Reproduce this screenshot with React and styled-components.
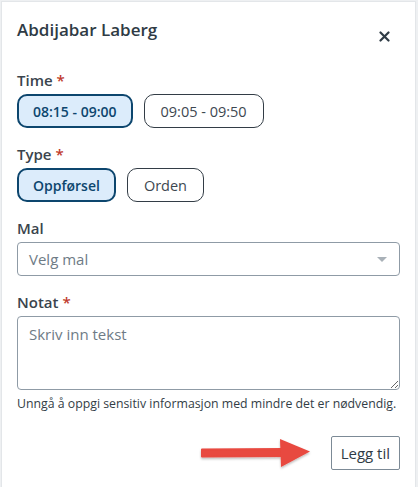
import React from 'react'
import styled, { createGlobalStyle } from 'styled-components'

const GlobalStyle = createGlobalStyle`
  html, body {
    margin: 0;
    padding: 0;
    background: #eef0f2;
  }
  body {
    font-family: "Open Sans", "Noto Sans", sans-serif;
    color: #2f3b45;
  }
`

const times = [
  { label: '08:15 - 09:00', active: true },
  { label: '09:05 - 09:50', active: false }
]

const types = [
  { label: 'Oppførsel', active: true },
  { label: 'Orden', active: false }
]

const App = () => (
  <>
    <GlobalStyle />
    <Card>
      <Header>
        <Title>Abdijabar Laberg</Title>
        <Close aria-label="Lukk">
          <svg width="11" height="11" viewBox="0 0 11 11">
            <path d="M1.5 1.5 L9.5 9.5 M9.5 1.5 L1.5 9.5" stroke="#2f3b45" strokeWidth="2.2" strokeLinecap="round" />
          </svg>
        </Close>
      </Header>

      <Field>
        <Label>Time <Req>*</Req></Label>
        <Chips>
          {times.map(t => (
            <Chip key={t.label} $active={t.active}>{t.label}</Chip>
          ))}
        </Chips>
      </Field>

      <Field>
        <Label>Type <Req>*</Req></Label>
        <Chips>
          {types.map(t => (
            <Chip key={t.label} $active={t.active}>{t.label}</Chip>
          ))}
        </Chips>
      </Field>

      <Field>
        <Label>Mal</Label>
        <Select>
          <span>Velg mal</span>
          <Caret />
        </Select>
      </Field>

      <Field>
        <Label>Notat <Req>*</Req></Label>
        <TextArea placeholder="Skriv inn tekst" />
        <Help>Unngå å oppgi sensitiv informasjon med mindre det er nødvendig.</Help>
      </Field>

      <Footer>
        <Arrow width="120" height="36" viewBox="0 0 120 36">
          <defs>
            <filter id="sh" x="-10%" y="-30%" width="120%" height="160%">
              <feDropShadow dx="0" dy="1.5" stdDeviation="1.2" floodColor="#000" floodOpacity="0.28" />
            </filter>
          </defs>
          <g filter="url(#sh)">
            <path d="M6 13.5 L88 13 L88 20 L6 20.5 Z" fill="#e8483f" stroke="#e8483f" strokeWidth="2" strokeLinejoin="round" />
            <path d="M84 3 L114 15.5 L85 31 Z" fill="#e8483f" />
          </g>
        </Arrow>
        <SubmitButton>Legg til</SubmitButton>
      </Footer>
    </Card>
  </>
)

const Card = styled.div`
  position: relative;
  box-sizing: border-box;
  margin: 1px 2px 0 1px;
  height: 486px;
  background: #fff;
  border: 1px solid #e3e6e9;
  border-bottom: none;
  padding: 16px 15px 0 15px;
`

const Header = styled.div`
  display: flex;
  align-items: flex-start;
  justify-content: space-between;
  margin-bottom: 28px;
`

const Title = styled.h2`
  margin: 0;
  font-size: 17px;
  line-height: 24px;
  font-weight: 600;
  color: #2f3b45;
`

const Close = styled.button`
  border: none;
  background: none;
  padding: 0;
  margin: 13px 10px 0 0;
  width: 11px;
  height: 11px;
  display: flex;
  cursor: pointer;
`

const Field = styled.div`
  margin-bottom: 16px;
`

const Label = styled.div`
  font-size: 15px;
  line-height: 20px;
  font-weight: 600;
  color: #3a444d;
  margin-bottom: 4px;
`

const Req = styled.span`
  color: #c0392b;
`

const Chips = styled.div`
  display: flex;
  gap: 11px;
`

const Chip = styled.button`
  box-sizing: border-box;
  height: 34px;
  padding: 0 ${p => (p.$active ? '14px' : '16px')};
  border-radius: 10px;
  font-family: inherit;
  font-size: ${p => (p.$active ? '14px' : '14.5px')};
  cursor: pointer;
  border: ${p => (p.$active ? '2px solid #0d466e' : '1px solid #333d46')};
  background: ${p => (p.$active ? '#dcecfb' : '#fff')};
  color: ${p => (p.$active ? '#0d466e' : '#3d4750')};
  font-weight: ${p => (p.$active ? 600 : 400)};
`

const Select = styled.div`
  box-sizing: border-box;
  height: 34px;
  display: flex;
  align-items: center;
  justify-content: space-between;
  padding: 0 12px 0 11px;
  border: 1px solid #8f9ba6;
  border-radius: 4px;
  font-size: 15px;
  color: #6e7b86;
`

const Caret = styled.span`
  width: 0;
  height: 0;
  border-left: 5px solid transparent;
  border-right: 5px solid transparent;
  border-top: 5px solid #a9b1b8;
`

const TextArea = styled.textarea`
  display: block;
  box-sizing: border-box;
  width: 100%;
  height: 74px;
  padding: 7px 11px;
  border: 1px solid #8f9ba6;
  border-radius: 4px;
  font-family: inherit;
  font-size: 15px;
  color: #2f3b45;
  resize: vertical;
  &::placeholder {
    color: #6e7b86;
  }
`

const Help = styled.div`
  margin-top: 6px;
  font-size: 12.3px;
  line-height: 16px;
  color: #333d46;
`

const Footer = styled.div`
  position: relative;
  display: flex;
  justify-content: flex-end;
  margin-top: 24px;
`

const Arrow = styled.svg`
  position: absolute;
  left: 179px;
  top: 0px;
`

const SubmitButton = styled.button`
  box-sizing: border-box;
  height: 34px;
  padding: 0 9px;
  border: 1px solid #7c8a96;
  border-radius: 2px;
  background: #fff;
  font-family: inherit;
  font-size: 15px;
  color: #2f3b45;
  cursor: pointer;
`

export default App
